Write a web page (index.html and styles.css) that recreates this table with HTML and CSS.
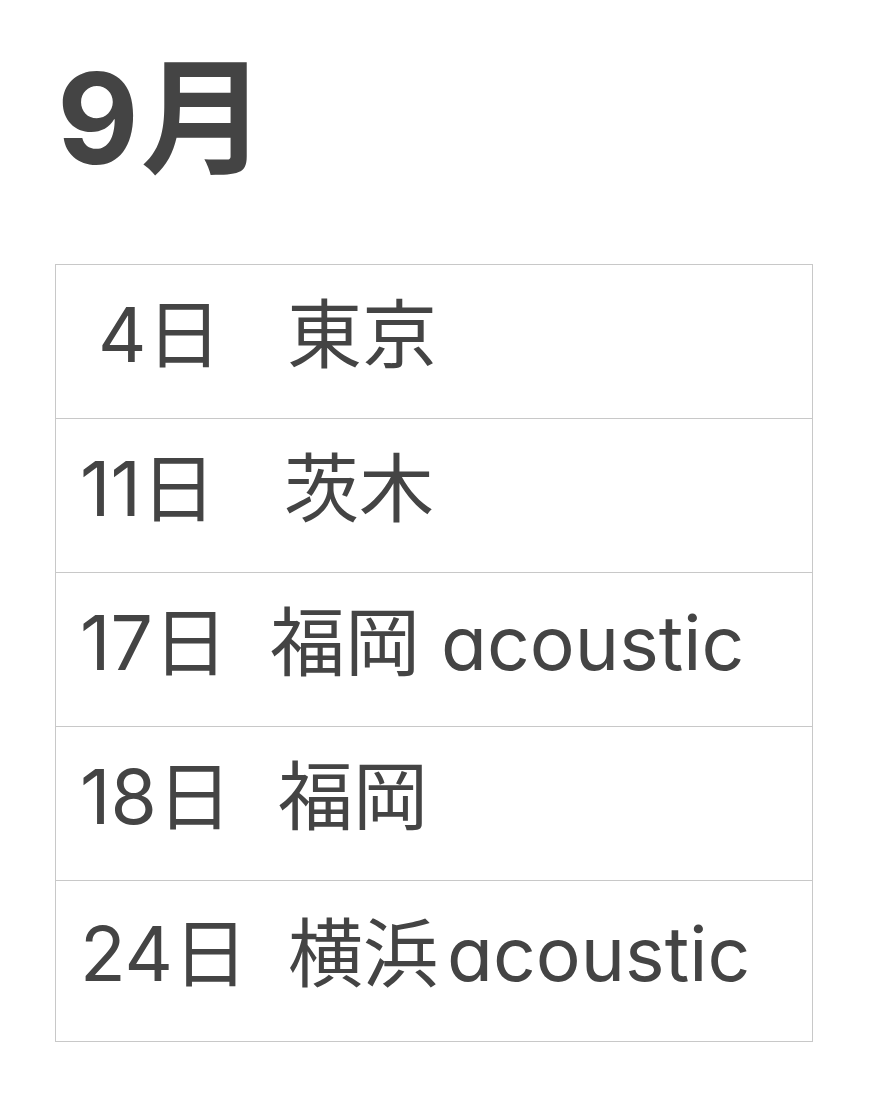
FILE: index.html
```html
<!DOCTYPE html>
<html lang="ja">
<head>
<meta charset="utf-8">
<link rel="stylesheet" href="styles.css">
</head>
<body>
<main class="page">
  <h1 class="month">9月</h1>
  <table class="schedule">
    <tr><td><span class="date d1">4日</span><span class="place">東京</span></td></tr>
    <tr><td><span class="date d2">11日</span><span class="place">茨木</span></td></tr>
    <tr><td><span class="date d3">17日</span><span class="place">福岡 acoustic</span></td></tr>
    <tr><td><span class="date d4">18日</span><span class="place">福岡</span></td></tr>
    <tr class="last"><td><span class="date d5">24日</span><span class="place">横浜<span class="latin">acoustic</span></span></td></tr>
  </table>
</main>
</body>
</html>
```
FILE: styles.css
```css
html, body {
  margin: 0;
  padding: 0;
  background: #ffffff;
}
body {
  font-family: Inter, "Noto Sans CJK JP", sans-serif;
  font-feature-settings: "cv11" 1;
  color: #444444;
}
.page {
  padding: 48px 0 0 55px;
}
.month {
  margin: 0 0 0 2px;
  font-size: 126px;
  font-weight: 700;
  line-height: 140px;
  letter-spacing: 2px;
}
.schedule {
  margin-top: 76px;
  width: 758px;
  border-collapse: collapse;
}
.schedule td {
  border: 1px solid #c8c8c8;
  height: 139px;
  padding: 0 0 14px 24px;
  font-size: 75px;
  line-height: 1;
  white-space: nowrap;
  vertical-align: middle;
}
.schedule .last td {
  height: 144px;
  padding-bottom: 16px;
}
.date {
  display: inline-block;
}
.d1 { margin-left: 18px; width: 189px; }
.d2 { width: 204px; }
.d3 { width: 190px; }
.d4 { width: 198px; }
.d5 { margin-left: 0; width: 208px; }
.latin { margin-left: 9px; }
```
